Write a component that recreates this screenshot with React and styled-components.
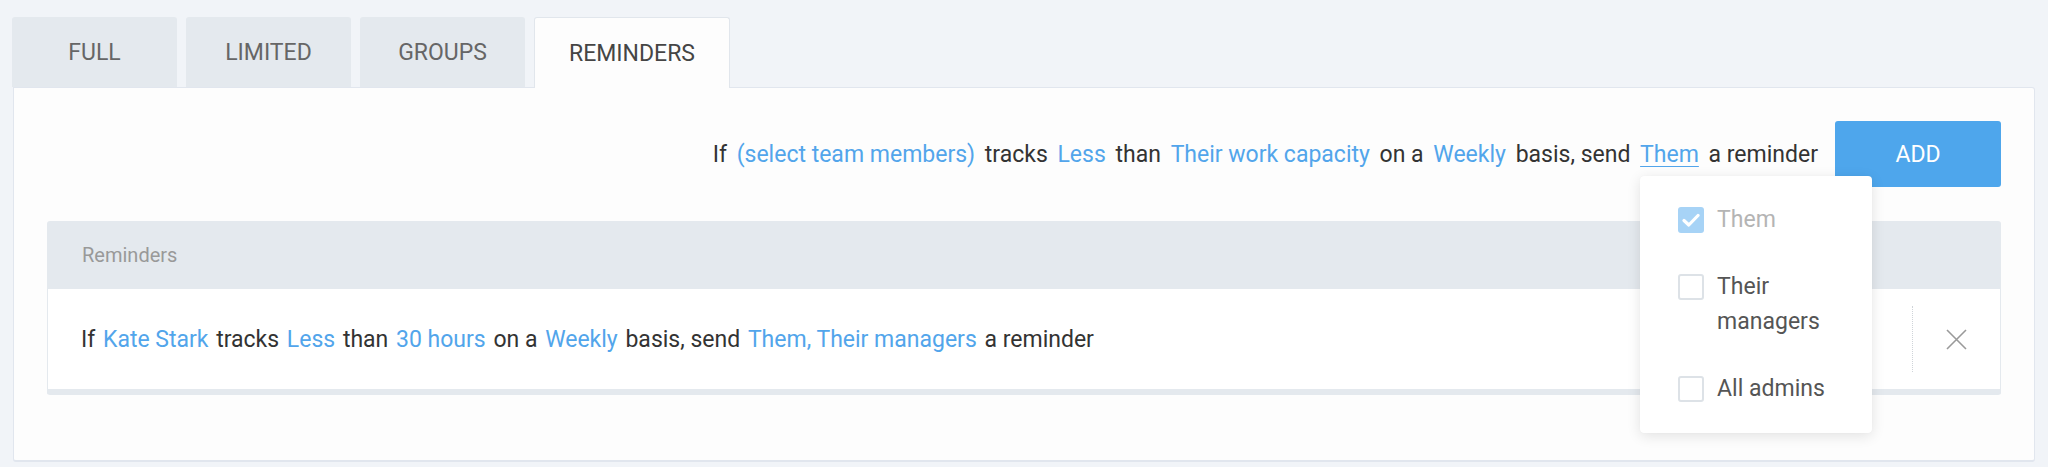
import React from 'react';
import styled, { createGlobalStyle } from 'styled-components';

const Global = createGlobalStyle`
  html, body { margin: 0; padding: 0; background: #f1f4f8; }
  body { font-family: Roboto, "Liberation Sans", Arial, sans-serif; -webkit-font-smoothing: antialiased; }
  * { box-sizing: border-box; }
`;

const Page = styled.div`
  width: 2048px;
  padding: 17px 13px 5px 12px;
`;

const Tabs = styled.div`
  display: flex;
  gap: 9px;
  position: relative;
  z-index: 1;
`;

const Tab = styled.div`
  min-width: 165px;
  height: ${(p) => (p.$active ? '71px' : '70px')};
  margin-bottom: ${(p) => (p.$active ? '-1px' : '0')};
  padding: 0 34px;
  display: flex;
  align-items: center;
  justify-content: center;
  font-size: 23px;
  text-transform: uppercase;
  background: ${(p) => (p.$active ? '#fdfdfd' : '#e4e9ee')};
  color: ${(p) => (p.$active ? '#454545' : '#666')};
  border: 1px solid ${(p) => (p.$active ? '#e1e6ec' : '#e4e9ee')};
  border-bottom: none;
  border-radius: 3px 3px 0 0;
`;

const Panel = styled.div`
  margin-left: 1px;
  background: #fdfdfd;
  border: 1px solid #e1e6ee;
  border-bottom-width: 2px;
  border-radius: 0 3px 3px 3px;
  padding: 33px 33px 65px 33px;
`;

const Toolbar = styled.div`
  display: flex;
  justify-content: flex-end;
  align-items: center;
  gap: 17px;
`;

const Sentence = styled.div`
  font-size: 23px;
  color: #333;
  white-space: nowrap;
`;

const Link = styled.span`
  color: #52a5eb;
  margin: 0 ${(p) => p.$space || 2}px;
  cursor: pointer;
  text-decoration: ${(p) => (p.$underline ? 'underline' : 'none')};
  text-underline-offset: 4px;
  text-decoration-thickness: 1px;
`;

const Anchor = styled.span`
  position: relative;
  display: inline-block;
`;

const AddButton = styled.button`
  width: 166px;
  height: 66px;
  border: none;
  border-radius: 3px;
  background: #4ea6ec;
  color: #fff;
  font-family: inherit;
  font-size: 23px;
  text-transform: uppercase;
  cursor: pointer;
`;

const Table = styled.div`
  margin-top: 34px;
  border-radius: 3px;
  overflow: hidden;
`;

const Header = styled.div`
  height: 68px;
  background: #e4e9ee;
  display: flex;
  align-items: center;
  padding-left: 35px;
  font-size: 20px;
  color: #999;
`;

const Row = styled.div`
  height: 106px;
  background: #fff;
  border-left: 1px solid #e4e9ee;
  border-right: 1px solid #e4e9ee;
  border-bottom: 6px solid #e4e9ee;
  display: flex;
  align-items: center;
`;

const RowText = styled.div`
  flex: 1;
  padding-left: 33px;
  font-size: 23px;
  color: #333;
`;

const CloseCell = styled.div`
  width: 88px;
  height: 66px;
  border-left: 1px dotted #cfd4d9;
  display: flex;
  align-items: center;
  justify-content: center;
  cursor: pointer;
`;

const Dropdown = styled.div`
  position: absolute;
  left: 4px;
  top: calc(100% + 8px);
  width: 232px;
  background: #fff;
  border-radius: 4px;
  box-shadow: 0 3px 14px rgba(0, 0, 0, 0.11), 0 0 1px rgba(0, 0, 0, 0.06);
  padding: 26px 38px 27px 38px;
  display: flex;
  flex-direction: column;
  gap: 32px;
  z-index: 5;
  white-space: normal;
`;

const Option = styled.label`
  display: flex;
  align-items: flex-start;
  gap: 13px;
  font-size: 23px;
  line-height: 35px;
  color: ${(p) => (p.$disabled ? '#b4b4b4' : '#555')};
`;

const Box = styled.span`
  flex: none;
  width: 26px;
  height: 26px;
  margin-top: 5px;
  border-radius: 3px;
  border: ${(p) => (p.$checked ? 'none' : '2px solid #dde2e7')};
  background: ${(p) => (p.$checked ? '#a7d3f6' : '#fff')};
  display: flex;
  align-items: center;
  justify-content: center;
`;

const Check = () => (
  <svg width="18" height="14" viewBox="0 0 18 14" fill="none">
    <path d="M2 7.5 L6.8 12 L16 2.5" stroke="#fff" strokeWidth="3.2" strokeLinecap="round" strokeLinejoin="round" />
  </svg>
);

const CloseIcon = () => (
  <svg width="21" height="21" viewBox="0 0 21 21" fill="none">
    <path d="M1 1 L20 20 M20 1 L1 20" stroke="#9a9a9a" strokeWidth="1.6" />
  </svg>
);

const options = [
  { label: 'Them', checked: true, disabled: true },
  { label: 'Their managers', checked: false },
  { label: 'All admins', checked: false },
];

export default function App() {
  return (
    <Page>
      <Global />
      <Tabs>
        <Tab>Full</Tab>
        <Tab>Limited</Tab>
        <Tab>Groups</Tab>
        <Tab $active>Reminders</Tab>
      </Tabs>
      <Panel>
        <Toolbar>
          <Sentence>
            If <Link $space={4}>(select team members)</Link> tracks <Link $space={4}>Less</Link> than{' '}
            <Link $space={4}>Their work capacity</Link> on a <Link $space={4}>Weekly</Link> basis, send{' '}
            <Anchor>
              <Link $space={4} $underline>Them</Link>
              <Dropdown>
                {options.map((o) => (
                  <Option key={o.label} $disabled={o.disabled}>
                    <Box $checked={o.checked}>{o.checked && <Check />}</Box>
                    <span>{o.label}</span>
                  </Option>
                ))}
              </Dropdown>
            </Anchor>{' '}
            a reminder
          </Sentence>
          <AddButton>Add</AddButton>
        </Toolbar>
        <Table>
          <Header>Reminders</Header>
          <Row>
            <RowText>
              If <Link>Kate Stark</Link> tracks <Link>Less</Link> than <Link>30 hours</Link> on a{' '}
              <Link>Weekly</Link> basis, send <Link>Them, Their managers</Link> a reminder
            </RowText>
            <CloseCell>
              <CloseIcon />
            </CloseCell>
          </Row>
        </Table>
      </Panel>
    </Page>
  );
}
